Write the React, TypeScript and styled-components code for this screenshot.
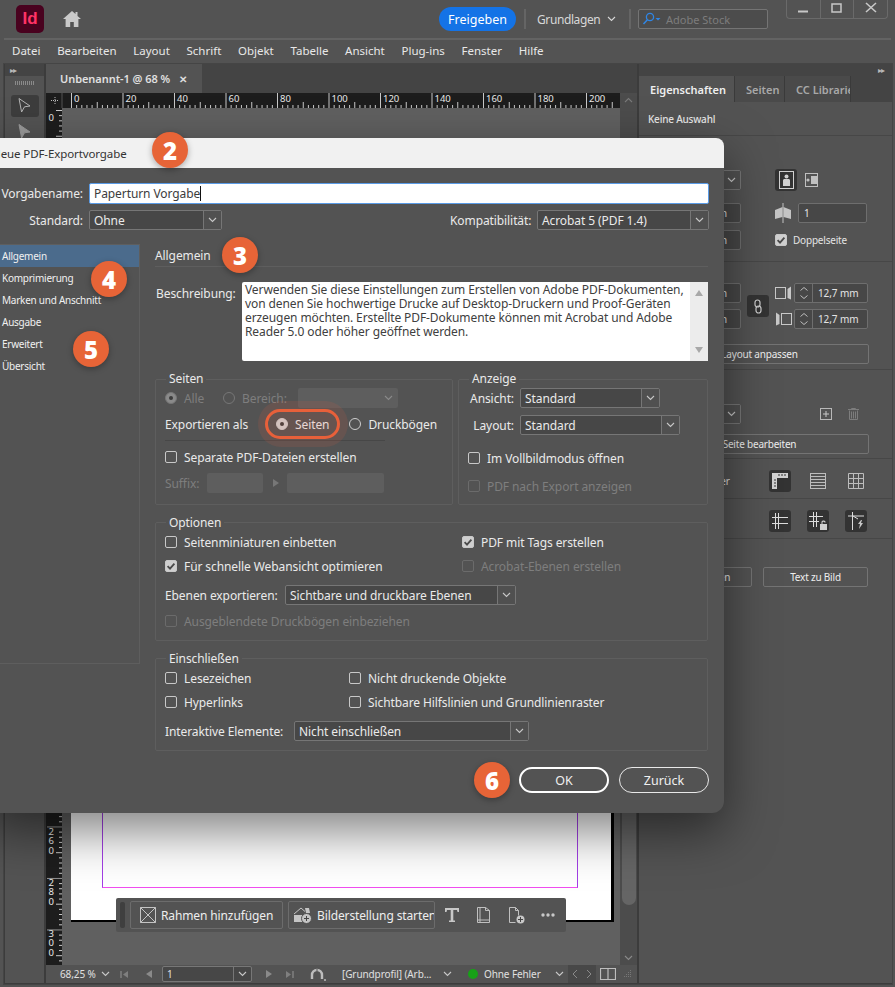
import React from "react";
import styled, { createGlobalStyle } from "styled-components";

const FONT = `"Noto Sans", "Open Sans", sans-serif`;
const TRACK = "-0.09px";

const Global = createGlobalStyle`
  html, body { margin: 0; padding: 0; background: #535353; }
  * { box-sizing: border-box; }
  svg { flex: none; }
`;

/* app window */
const Window = styled.div`
  position: relative;
  width: 895px;
  height: 987px;
  overflow: hidden;
  background: #535353;
  color: #e4e4e4;
  font-family: ${FONT};
  font-size: 12px;
  display: flex;
  flex-direction: column;
`;

const TitleBar = styled.div`
  height: 40px;
  margin: 0 4px;
  border-bottom: 2px solid #636363;
  display: flex;
  align-items: center;
  padding-left: 12px;
  flex: none;
  position: relative;
`;

const AppLogo = styled.div`
  width: 28px;
  height: 28px;
  border-radius: 5px;
  background: #49021f;
  color: #ff3366;
  font-family: "Liberation Sans", sans-serif;
  font-weight: 700;
  font-size: 17px;
  display: flex;
  align-items: center;
  justify-content: center;
`;

const HomeBtn = styled.div`
  margin-left: 19px;
  width: 18px;
  height: 16px;
  display: flex;
`;

const ShareBtn = styled.div`
  margin-left: 358px;
  width: 77px;
  height: 24px;
  border-radius: 12px;
  background: #1473e6;
  color: #fff;
  font-size: 12.5px;
  display: flex;
  align-items: center;
  justify-content: center;
`;

const BarSep = styled.div<{ $ml: number; $mr: number }>`
  width: 2px;
  height: 20px;
  background: #656565;
  margin: 0 ${(p) => p.$mr}px 0 ${(p) => p.$ml}px;
`;

const Workspace = styled.span`
  font-size: 12px;
  letter-spacing: -0.4px;
  color: #d8d8d8;
  width: 62px;
  white-space: nowrap;
`;

const WorkspaceChevron = styled.div`
  width: 25px;
  display: flex;
  justify-content: center;
`;

const SearchBox = styled.div`
  width: 130px;
  height: 20px;
  border: 1px solid #747474;
  border-radius: 2px;
  background: #4c4c4c;
  display: flex;
  align-items: center;
  gap: 4px;
  padding-left: 3px;
  color: #7d7d7d;
  font-size: 11px;
`;

const WinControls = styled.div`
  position: absolute;
  top: -2px;
  right: 3px;
  width: 102px;
  height: 21px;
  border: 1px solid #6a6a6a;
  border-top: 0;
  border-radius: 0 0 4px 4px;
  display: flex;
`;

const WinCtl = styled.div`
  flex: 1;
  display: flex;
  align-items: center;
  justify-content: center;
  border-right: 1px solid #6a6a6a;
  &:last-child { border-right: 0; }
`;

const MenuBar = styled.div`
  height: 23px;
  margin: 0 4px;
  padding: 0 0 2px 8px;
  display: flex;
  align-items: center;
  gap: 16.7px;
  flex: none;
  font-size: 11.5px;
  color: #e8e8e8;
`;

/* workspace */
const Main = styled.div`
  flex: 1;
  display: flex;
  margin: 1px 3px 3px 4px;
  min-height: 0;
  border-bottom: 1px solid #3c3c3c;
  outline: 1px solid #454545;
`;

const ToolColumn = styled.div`
  width: 42px;
  flex: none;
  display: flex;
  flex-direction: column;
  align-items: center;
  border-right: 2px solid #3c3c3c;
  border-left: 1px solid #3c3c3c;
`;

const CollapseBar = styled.div<{ $right?: boolean }>`
  height: 12px;
  width: 100%;
  flex: none;
  background: #444;
  color: #b8b8b8;
  font-size: 8px;
  line-height: 12px;
  letter-spacing: -1px;
  text-align: ${(p) => (p.$right ? "right" : "left")};
  padding: 0 8px 0 5px;
`;

const Grip = styled.div`
  width: 20px;
  height: 4px;
  margin-top: 5px;
  background: repeating-linear-gradient(90deg, #8a8a8a 0 1px, transparent 1px 2px);
`;

const ToolBtn = styled.div<{ $on?: boolean }>`
  width: 28px;
  height: 22px;
  margin-top: ${(p) => (p.$on ? "10px" : "4px")};
  border-radius: 3px;
  background: ${(p) => (p.$on ? "#3d3d3d" : "transparent")};
  display: flex;
  align-items: center;
  justify-content: center;
`;

const DocColumn = styled.div`
  width: 591px;
  flex: none;
  display: flex;
  flex-direction: column;
  min-height: 0;
`;

const TabRow = styled.div`
  height: 29px;
  background: #444;
  flex: none;
  display: flex;
`;

const DocTab = styled.div`
  width: 156px;
  background: #535353;
  display: flex;
  align-items: center;
  padding-left: 14px;
  gap: 9px;
  font-weight: 600;
  font-size: 11px;
  letter-spacing: -0.05px;
  color: #e0e0e0;
`;

const CloseX = styled.span`
  font-size: 10px;
  font-weight: 700;
  color: #ddd;
`;

const DocBody = styled.div`
  flex: 1;
  display: flex;
  min-height: 0;
`;

const DocArea = styled.div`
  flex: 1;
  display: flex;
  flex-direction: column;
  min-width: 0;
`;

const TopRuler = styled.svg`
  display: block;
  width: 574px;
  height: 15px;
  flex: none;
  background: #1d1d1d;
`;

const CanvasRow = styled.div`
  flex: 1;
  display: flex;
  min-height: 0;
  position: relative;
`;

const SideRuler = styled.svg`
  display: block;
  width: 16px;
  height: 100%;
  flex: none;
  background: #1d1d1d;
`;

const Canvas = styled.div`
  flex: 1;
  background: #606060;
  display: flex;
  align-items: flex-end;
  padding: 0 0 43px 9px;
`;

const Page = styled.div`
  width: 543px;
  height: 620px;
  background: #fff;
  border-right: 3px solid #000;
  border-bottom: 2px solid #000;
  padding: 0 33px 32px 31px;
  display: flex;
`;

const MarginBox = styled.div`
  flex: 1;
  border: 1px solid #a33fe6;
  border-bottom-color: #f14df0;
`;

const FloatBar = styled.div`
  position: absolute;
  left: 70px;
  bottom: 33px;
  width: 450px;
  height: 34px;
  background: #535353;
  border-radius: 2px;
  display: flex;
  align-items: center;
  padding-left: 4px;
`;

const FloatGrip = styled.div`
  width: 5px;
  height: 26px;
  background: #3f3f3f;
  border-radius: 2px;
  margin-right: 5px;
`;

const FloatBtn = styled.div<{ $w: number; $pl: number }>`
  width: ${(p) => p.$w}px;
  height: 28px;
  flex: none;
  border: 1px solid #6c6c6c;
  border-radius: 2px;
  margin-right: 5px;
  display: flex;
  align-items: center;
  gap: 5px;
  padding-left: ${(p) => p.$pl}px;
  font-size: 12px;
  letter-spacing: -0.12px;
  color: #eee;
  white-space: nowrap;
  overflow: hidden;
`;

const FloatIcon = styled.div<{ $ml: number }>`
  margin-left: ${(p) => p.$ml}px;
  display: flex;
`;

const VScroll = styled.div`
  width: 17px;
  flex: none;
  background: #4c4c4c;
  display: flex;
  flex-direction: column;
  align-items: center;
  padding: 4px 0 4px;
`;

const ScrollThumb = styled.div`
  width: 14px;
  height: 510px;
  margin-top: auto;
  margin-bottom: 50px;
  background: #656565;
  border-radius: 7px;
`;

const StatusBar = styled.div`
  height: 18px;
  flex: none;
  background: #535353;
  display: flex;
  align-items: center;
  padding-left: 14px;
  font-size: 10px;
  letter-spacing: -0.1px;
  color: #e0e0e0;
  white-space: nowrap;
`;

const StatusText = styled.span<{ $w: number }>`
  width: ${(p) => p.$w}px;
  flex: none;
`;

const StatusIcon = styled.div<{ $w: number }>`
  width: ${(p) => p.$w}px;
  flex: none;
  display: flex;
  align-items: center;
  justify-content: center;
`;

const PageField = styled.div`
  width: 90px;
  height: 16px;
  flex: none;
  border: 1px solid #777;
  border-radius: 2px;
  background: #474747;
  display: flex;
  align-items: center;
  padding-left: 4px;
`;

const PageFieldArrow = styled.div`
  margin-left: auto;
  width: 18px;
  height: 100%;
  border-left: 1px solid #777;
  display: flex;
  align-items: center;
  justify-content: center;
`;

const StatusDot = styled.div`
  width: 10px;
  height: 10px;
  border-radius: 50%;
  background: #17a117;
  margin: 0 6px 0 0;
  flex: none;
`;

const StatusNav = styled.div`
  width: 28px;
  height: 100%;
  margin-left: 2px;
  background: #484848;
  flex: none;
  display: flex;
  align-items: center;
  justify-content: space-around;
`;

/* right panel */
const Panel = styled.div`
  flex: 1;
  display: flex;
  flex-direction: column;
  border-left: 2px solid #3c3c3c;
  min-width: 0;
`;

const PanelTabs = styled.div`
  height: 26px;
  flex: none;
  display: flex;
  background: #444;
  font-size: 11px;
  font-weight: 600;
`;

const PanelTab = styled.div<{ $w: number; $on?: boolean }>`
  width: ${(p) => p.$w}px;
  flex: none;
  display: flex;
  align-items: center;
  padding-left: 11px;
  white-space: nowrap;
  overflow: hidden;
  background: ${(p) => (p.$on ? "#535353" : "#4a4a4a")};
  color: ${(p) => (p.$on ? "#eee" : "#a8a8a8")};
  border-right: 1px solid #3a3a3a;
`;

const PanelSection = styled.div<{ $h: number; $pt?: number }>`
  height: ${(p) => p.$h}px;
  flex: none;
  padding: ${(p) => p.$pt ?? 0}px 23px 0 11px;
  border-bottom: 1px solid #474747;
  display: flex;
  flex-direction: column;
`;

const NoSelection = styled.div`
  font-size: 10px;
  letter-spacing: -0.2px;
  font-weight: 500;
  height: 33px;
  margin-left: -2px;
  display: flex;
  align-items: center;
  color: #e6e6e6;
`;

const PanelRow = styled.div<{ $mt?: number; $pl?: number }>`
  display: flex;
  align-items: center;
  margin-top: ${(p) => p.$mt ?? 0}px;
  padding-left: ${(p) => p.$pl ?? 0}px;
`;

const PanelColumn = styled.div<{ $ml?: number }>`
  display: flex;
  flex-direction: column;
  gap: 6px;
  margin-left: ${(p) => p.$ml ?? 0}px;
`;

const PanelField = styled.div<{ $w: number; $ml?: number }>`
  width: ${(p) => p.$w}px;
  height: 20px;
  flex: none;
  margin-left: ${(p) => p.$ml ?? 0}px;
  border: 1px solid #6e6e6e;
  border-radius: 2px;
  background: #474747;
  display: flex;
  align-items: center;
  padding: 0 ${(p) => (p.$w < 80 ? 5 : 13)}px 0 5px;
  font-size: 10px;
  color: #e6e6e6;
  justify-content: ${(p) => (p.$w < 80 ? "flex-start" : "flex-end")};
  white-space: nowrap;
`;

const SpinField = styled.div`
  width: 74px;
  height: 20px;
  flex: none;
  margin-left: 2px;
  border: 1px solid #6e6e6e;
  border-radius: 2px;
  background: #474747;
  display: flex;
  align-items: center;
  font-size: 10px;
  letter-spacing: -0.1px;
`;

const SpinArrows = styled.div`
  width: 18px;
  height: 100%;
  border-right: 1px solid #6e6e6e;
  display: flex;
  align-items: center;
  justify-content: center;
  margin-right: 5px;
`;

const IconBtn = styled.div<{ $w?: number; $ml?: number; $on?: boolean }>`
  width: ${(p) => p.$w ?? 22}px;
  height: 22px;
  flex: none;
  margin-left: ${(p) => p.$ml ?? 0}px;
  border-radius: 3px;
  background: ${(p) => (p.$on ? "#333" : "transparent")};
  display: flex;
  align-items: center;
  justify-content: center;
`;

const PanelButton = styled.div<{ $w?: number; $ml?: number }>`
  width: ${(p) => (p.$w ? `${p.$w}px` : "100%")};
  height: 20px;
  flex: none;
  margin-left: ${(p) => p.$ml ?? 0}px;
  border: 1px solid #747474;
  border-radius: 2px;
  display: flex;
  align-items: center;
  justify-content: center;
  font-size: 10px;
  letter-spacing: -0.2px;
  color: #eee;
  white-space: nowrap;
`;

const PanelLabel = styled.div`
  width: 80px;
  text-align: right;
  font-size: 10px;
  flex: none;
  white-space: nowrap;
`;

const PanelCheckText = styled.span`
  font-size: 10px;
  letter-spacing: -0.2px;
  margin-left: 6px;
`;

const PanelCheck = styled.div`
  margin-left: 34px;
  display: flex;
`;

/* dialog */
const Dialog = styled.div`
  position: absolute;
  left: -14px;
  top: 138px;
  width: 738px;
  height: 675px;
  background: #535353;
  border-radius: 0 10px 12px 0;
  box-shadow: 0 18px 50px rgba(0, 0, 0, 0.5);
  color: #eaeaea;
  font-size: 12px;
`;

const DialogTitle = styled.div`
  height: 30px;
  background: #f1f1f1;
  color: #333;
  border-radius: 0 8px 0 0;
  display: flex;
  align-items: center;
  padding-left: 6px;
  font-size: 11.5px;
  margin-bottom: 15px;
  letter-spacing: -0.1px;
`;

const FormRow = styled.div<{ $mt?: number }>`
  display: flex;
  align-items: center;
  margin-top: ${(p) => p.$mt ?? 0}px;
  width: 723px;
`;

const FieldLabel = styled.div<{ $w: number; $right?: boolean; $ml?: number }>`
  width: ${(p) => p.$w}px;
  flex: none;
  margin-left: ${(p) => p.$ml ?? 0}px;
  text-align: ${(p) => (p.$right ? "right" : "left")};
  white-space: nowrap;
  letter-spacing: ${TRACK};
`;

const NameInput = styled.div`
  margin-left: 6px;
  flex: 1;
  height: 21px;
  background: #fff;
  border: 1px solid #5a9be6;
  border-radius: 2px;
  color: #3c3c3c;
  display: flex;
  align-items: center;
  padding-left: 4px;
  letter-spacing: ${TRACK};
`;

const Caret = styled.span`
  width: 1px;
  height: 15px;
  background: #111;
`;

const SelectBox = styled.div<{ $w: number; $ml?: number }>`
  width: ${(p) => p.$w}px;
  height: 20px;
  flex: none;
  margin-left: ${(p) => p.$ml ?? 0}px;
  border: 1px solid #767676;
  border-radius: 2px;
  background: #474747;
  display: flex;
  align-items: center;
  letter-spacing: ${TRACK};
`;

const SelectValue = styled.div`
  flex: 1;
  padding-left: 4px;
  white-space: nowrap;
  overflow: hidden;
`;

const SelectArrow = styled.div`
  width: 18px;
  height: 100%;
  flex: none;
  border-left: 1px solid #767676;
  background: #505050;
  display: flex;
  align-items: center;
  justify-content: center;
`;

const DialogBody = styled.div`
  display: flex;
  margin-top: 14px;
`;

const SideNav = styled.div`
  width: 154px;
  height: 420px;
  flex: none;
  border-top: 1px solid #5e5e5e;
  border-right: 1px solid #5e5e5e;
  border-bottom: 1px solid #5e5e5e;
`;

const NavItem = styled.div<{ $on?: boolean }>`
  height: 22px;
  padding-left: 16px;
  display: flex;
  align-items: center;
  font-size: 10px;
  letter-spacing: -0.25px;
  color: #f0f0f0;
  background: ${(p) => (p.$on ? "#4b6b8c" : "transparent")};
`;

const Content = styled.div`
  width: 553px;
  margin-left: 15px;
`;

const SectionHead = styled.div`
  height: 23px;
  border-bottom: 1px solid #5e5e5e;
  display: flex;
  align-items: center;
  letter-spacing: ${TRACK};
`;

const DescRow = styled.div`
  display: flex;
  margin-top: 15px;
`;

const DescLabel = styled.div`
  width: 87px;
  padding: 3px 0 0 1px;
  flex: none;
  letter-spacing: ${TRACK};
`;

const DescBox = styled.div`
  flex: 1;
  min-width: 0;
  height: 79px;
  background: #fff;
  border-radius: 2px;
  color: #404040;
  display: flex;
  line-height: 14px;
  letter-spacing: ${TRACK};
`;

const DescText = styled.div`
  flex: 1;
  min-width: 0;
  padding: 1px 0 0 3px;
  white-space: nowrap;
`;

const DescScroll = styled.div`
  width: 18px;
  flex: none;
  background: #ececec;
  display: flex;
  flex-direction: column;
  align-items: center;
  justify-content: space-between;
  padding: 7px 0;
`;

const GroupRow = styled.div`
  display: flex;
  gap: 5px;
  margin-top: 18px;
`;

const Group = styled.div<{ $w?: number; $h: number; $mt?: number }>`
  position: relative;
  width: ${(p) => (p.$w ? `${p.$w}px` : "100%")};
  height: ${(p) => p.$h}px;
  margin-top: ${(p) => p.$mt ?? 0}px;
  border: 1px solid #5e5e5e;
  border-radius: 2px;
  padding: 8px 0 0 9px;
  display: flex;
  flex-direction: column;
  flex: none;
`;

const Legend = styled.div<{ $top: number }>`
  position: absolute;
  top: ${(p) => p.$top}px;
  left: 10px;
  padding: 0 3px;
  background: #535353;
  letter-spacing: ${TRACK};
`;

const GRow = styled.div<{ $mt?: number }>`
  display: flex;
  align-items: center;
  height: 20px;
  flex: none;
  margin-top: ${(p) => p.$mt ?? 0}px;
`;

const GLabel = styled.span<{ $w?: number; $off?: boolean; $right?: boolean }>`
  ${(p) => (p.$w ? `width: ${p.$w}px; flex: none;` : "")}
  text-align: ${(p) => (p.$right ? "right" : "left")};
  color: ${(p) => (p.$off ? "#7e7e7e" : "#eaeaea")};
  white-space: nowrap;
  letter-spacing: ${TRACK};
`;

const CheckBox = styled.div<{ $off?: boolean; $on?: boolean }>`
  width: 12px;
  height: 12px;
  flex: none;
  border-radius: 2px;
  border: 1px solid ${(p) => (p.$off ? "#6b6b6b" : "#c8c8c8")};
  background: ${(p) => (p.$on ? "#cfcfcf" : "transparent")};
  display: flex;
  align-items: center;
  justify-content: center;
`;

const CheckCell = styled.div<{ $w?: number }>`
  display: flex;
  align-items: center;
  gap: 7px;
  ${(p) => (p.$w ? `width: ${p.$w}px; flex: none;` : "")}
`;

const RadioDot = styled.div<{ $off?: boolean; $on?: boolean }>`
  width: 12px;
  height: 12px;
  flex: none;
  border-radius: 50%;
  border: 1px solid ${(p) => (p.$off ? "#777" : "#cfcfcf")};
  background: ${(p) => (p.$on ? (p.$off ? "#8a8a8a" : "#d2d2d2") : "transparent")};
  display: flex;
  align-items: center;
  justify-content: center;
  &::after {
    content: "";
    display: ${(p) => (p.$on ? "block" : "none")};
    width: 4px;
    height: 4px;
    border-radius: 50%;
    background: #3c3c3c;
  }
`;

const RadioCell = styled.div<{ $ml?: number; $w?: number }>`
  display: flex;
  align-items: center;
  gap: 7px;
  margin-left: ${(p) => p.$ml ?? 0}px;
  ${(p) => (p.$w ? `width: ${p.$w}px; flex: none;` : "")}
`;

const FocusRing = styled.div`
  position: relative;
  margin-left: 28px;
  display: flex;
  align-items: center;
  gap: 7px;
`;

const Halo = styled.div`
  position: absolute;
  left: -18px;
  top: 50%;
  margin-top: -23px;
  width: 90px;
  height: 46px;
  border-radius: 23px;
  background: rgba(232, 96, 58, 0.13);
  &::after {
    content: "";
    position: absolute;
    inset: 8px 8px 8px 7px;
    border: 3px solid #e8603a;
    border-radius: 15px;
  }
`;

const DisabledSelect = styled.div<{ $w: number }>`
  width: ${(p) => p.$w}px;
  height: 20px;
  flex: none;
  background: #5e5e5e;
  border-radius: 2px;
  display: flex;
  align-items: center;
  justify-content: flex-end;
  padding-right: 5px;
`;

const SuffixArrow = styled.div`
  width: 24px;
  flex: none;
  display: flex;
  justify-content: center;
`;

const Divider = styled.div`
  width: 220px;
  height: 1px;
  flex: none;
  margin-top: 6px;
  background: #474747;
`;

const ButtonRow = styled.div`
  display: flex;
  justify-content: flex-end;
  gap: 10px;
  margin-top: 16px;
  width: 554px;
`;

const DialogButton = styled.div<{ $primary?: boolean }>`
  width: 90px;
  height: 26px;
  border-radius: 13px;
  border: ${(p) => (p.$primary ? "2px solid #fff" : "1px solid #e8e8e8")};
  display: flex;
  align-items: center;
  justify-content: center;
  color: #f0f0f0;
  font-size: 12.5px;
`;

const Badge = styled.div<{ $x: number; $y: number }>`
  position: absolute;
  left: ${(p) => p.$x - 18}px;
  top: ${(p) => p.$y - 18}px;
  width: 36px;
  height: 36px;
  border-radius: 50%;
  background: #e76437;
  color: #fff;
  font-family: "Open Sans", sans-serif;
  font-weight: 800;
  font-size: 24px;
  display: flex;
  align-items: center;
  justify-content: center;
  box-shadow: 0 2px 6px rgba(0, 0, 0, 0.3);
`;

/* small drawings */
const Chevron = ({ c = "#c8c8c8", up }: { c?: string; up?: boolean }) => (
  <svg width="9" height="6" viewBox="0 0 9 6">
    <path d={up ? "M1 5l3.500-3.500L8 5" : "M1 1l3.500 3.500L8 1"} fill="none" stroke={c} strokeWidth="1.100" />
  </svg>
);

const Tick = () => (
  <svg width="10" height="10" viewBox="0 0 10 10">
    <path d="M1.600 5.200l2.400 2.500 4.400-5" fill="none" stroke="#4a4a4a" strokeWidth="1.800" />
  </svg>
);

const Triangle = ({ dir, c = "#8a8a8a", s = 8 }: { dir: "l" | "r" | "u" | "d"; c?: string; s?: number }) => {
  const pts = { l: "8,0 8,8 2,4", r: "2,0 2,8 8,4", u: "0,7 8,7 4,1", d: "0,1 8,1 4,7" }[dir];
  return (
    <svg width={s} height={s} viewBox="0 0 8 8">
      <polygon points={pts} fill={c} />
    </svg>
  );
};

const Spin = () => (
  <svg width="10" height="14" viewBox="0 0 10 14">
    <path d="M1.500 4.500L5 1.500l3.500 3M1.500 9.500L5 12.500l3.500-3" fill="none" stroke="#bdbdbd" strokeWidth="1" />
  </svg>
);

const HomeIcon = () => (
  <svg width="18" height="16" viewBox="0 0 18 16">
    <path d="M9 0L0 8h2.600v8h4.600v-5h3.600v5h4.600V8H18L14.500 4.900V1h-2v2.100z" fill="#c9c9c9" />
  </svg>
);

const SearchIcon = () => (
  <svg width="20" height="14" viewBox="0 0 20 14">
    <circle cx="8" cy="5" r="3.600" fill="none" stroke="#2f86e6" strokeWidth="1.300" />
    <path d="M5.400 7.800L1.500 12" stroke="#2f86e6" strokeWidth="1.500" />
    <path d="M13.500 6h5l-2.500 2.600z" fill="#2f86e6" />
  </svg>
);

const SelectArrowIcon = ({ filled }: { filled?: boolean }) => (
  <svg width="18" height="19" viewBox="0 0 18 19">
    <path d="M3 1.500l11 7.500-5.500.8L5.600 15z" fill={filled ? "#9a9a9a" : "none"} stroke={filled ? "#9a9a9a" : "#b4b4b4"} strokeWidth="1" />
  </svg>
);

const Portrait = () => (
  <svg width="15" height="18" viewBox="0 0 15 18">
    <rect x=".5" y=".5" width="14" height="17" fill="none" stroke="#d0d0d0" />
    <circle cx="7.500" cy="5.500" r="2" fill="#d0d0d0" />
    <path d="M4 15V9.500c0-.8.8-1.400 1.500-1.400h4c.8 0 1.500.6 1.500 1.400V15z" fill="#d0d0d0" />
  </svg>
);

const Landscape = () => (
  <svg width="13" height="14" viewBox="0 0 13 14">
    <rect x=".5" y=".5" width="12" height="13" fill="none" stroke="#c0c0c0" />
    <circle cx="3" cy="7" r="1.600" fill="#c0c0c0" />
    <path d="M6 3h6v8H6z" fill="#c0c0c0" />
  </svg>
);

const FacingPages = () => (
  <svg width="18" height="20" viewBox="0 0 18 20">
    <path d="M8.500 4L1 7v9l7.500-2zM9.500 4L17 7v9l-7.500-2z" fill="#c4c4c4" />
    <path d="M9 0v20" stroke="#c4c4c4" />
  </svg>
);

const ChainIcon = () => (
  <svg width="10" height="15" viewBox="0 0 10 15">
    <rect x="2" y="1" width="5" height="7" rx="2.500" fill="none" stroke="#ccc" strokeWidth="1.200" />
    <rect x="3" y="7" width="5" height="7" rx="2.500" fill="none" stroke="#ccc" strokeWidth="1.200" />
  </svg>
);

const MarginIcon = ({ flip }: { flip?: boolean }) => (
  <svg width="17" height="14" viewBox="0 0 17 14" style={flip ? { transform: "scaleX(-1)" } : undefined}>
    <rect x=".5" y="1.500" width="10" height="11" fill="none" stroke="#c8c8c8" />
    <path d="M12.500 3L16 .5v13l-3.500-1.500z" fill="#c8c8c8" />
  </svg>
);

const PlusBox = () => (
  <svg width="12" height="12" viewBox="0 0 12 12">
    <rect x=".5" y=".5" width="11" height="11" fill="none" stroke="#b8b8b8" />
    <path d="M6 3v6M3 6h6" stroke="#c8c8c8" />
  </svg>
);

const Trash = () => (
  <svg width="11" height="12" viewBox="0 0 11 12">
    <path d="M0 1.500h11M3.500 1.500V.5h4v1M1.500 2.500v9h8v-9M3.500 3.500v7M5.500 3.500v7M7.500 3.500v7" fill="none" stroke="#7d7d7d" />
  </svg>
);

const RulerIcon = () => (
  <svg width="16" height="16" viewBox="0 0 16 16">
    <path d="M0 0h16v5H5v11H0z" fill="#d0d0d0" />
    <path d="M7 1v2M10 1v2M13 1v2M2 7h2M2 10h2M2 13h2" stroke="#333" />
  </svg>
);

const LinesIcon = () => (
  <svg width="16" height="16" viewBox="0 0 16 16">
    <rect x=".5" y=".5" width="15" height="15" fill="none" stroke="#bdbdbd" />
    <path d="M0 3.500h16M0 6.500h16M0 9.500h16M0 12.500h16" stroke="#bdbdbd" />
  </svg>
);

const GridIcon = () => (
  <svg width="16" height="16" viewBox="0 0 16 16">
    <path d="M.5 .5h15v15H.5zM.5 5.500h15M.5 10.500h15M5.500 .5v15M10.500 .5v15" fill="none" stroke="#bdbdbd" />
  </svg>
);

const GuideIcon = ({ lock, bolt }: { lock?: boolean; bolt?: boolean }) => (
  <svg width="18" height="18" viewBox="0 0 18 18">
    {bolt ? (
      <>
        <path d="M5.500 0v18M1 4h16M6 4l5 3" fill="none" stroke="#dcdcdc" />
        <path d="M14 8l-3 4h2l-1 5 4-6h-2l1-3z" fill="#c8c8c8" />
      </>
    ) : (
      <>
        <path d={lock ? "M4.500 0v15M7.500 0v15M0 4.500h14M0 9.500h10" : "M4.500 1v16M7.500 1v16M1 5.500h16M1 11.500h16"} fill="none" stroke="#dcdcdc" />
        {lock && <path d="M11 12h7v6h-7zM12.500 12v-2c0-2 4-2 4 0v.5h-1c0-1-2-1-2 0v1.500z" fill="#d0d0d0" />}
      </>
    )}
  </svg>
);

const FrameIcon = () => (
  <svg width="16" height="16" viewBox="0 0 16 16">
    <path d="M.5 .5h15v15H.5zM.5 .5l15 15M15.500 .5l-15 15" fill="none" stroke="#c4c4c4" />
  </svg>
);

const GenImageIcon = () => (
  <svg width="19" height="17" viewBox="0 0 19 17">
    <path d="M1 7l7-6 4 3.500" fill="none" stroke="#c4c4c4" />
    <path d="M1 8h9v7H1z" fill="#c4c4c4" />
    <path d="M12 1h4l1 5h-4z" fill="#c4c4c4" />
    <circle cx="13.500" cy="11.500" r="5" fill="#c4c4c4" stroke="#535353" />
    <path d="M13.500 9v5M11 11.500h5" stroke="#444" />
  </svg>
);

const TextIcon = () => (
  <svg width="14" height="14" viewBox="0 0 14 14">
    <path d="M0 0h14v4h-1.500l-.5-2H8.300v10.500H10V14H4v-1.500h1.700V2H2l-.5 2H0z" fill="#c8c8c8" />
  </svg>
);

const DocsIcon = () => (
  <svg width="13" height="16" viewBox="0 0 13 16">
    <path d="M.5 .5h8l4 3v12H.5zM3 .5v15M.5 13h12M8.500 .5v3h4" fill="none" stroke="#c0c0c0" />
  </svg>
);

const DocPlusIcon = () => (
  <svg width="16" height="17" viewBox="0 0 16 17">
    <path d="M.5 .5h6l3 3v5M.5 .5v15h6M6.500 .5v3h3" fill="none" stroke="#c0c0c0" />
    <circle cx="11.500" cy="12.500" r="4" fill="#c8c8c8" />
    <path d="M11.500 10v5M9 12.500h5" stroke="#444" />
  </svg>
);

const DotsIcon = () => (
  <svg width="14" height="4" viewBox="0 0 14 4">
    <circle cx="2" cy="2" r="1.700" fill="#c8c8c8" />
    <circle cx="7" cy="2" r="1.700" fill="#c8c8c8" />
    <circle cx="12" cy="2" r="1.700" fill="#c8c8c8" />
  </svg>
);

const BarEnd = ({ right }: { right?: boolean }) => (
  <svg width="9" height="9" viewBox="0 0 9 9" style={right ? { transform: "scaleX(-1)" } : undefined}>
    <path d="M1 1v7" stroke="#7f7f7f" strokeWidth="1.500" />
    <path d="M8 1v7L3 4.500z" fill="#7f7f7f" />
  </svg>
);

const Gauge = () => (
  <svg width="16" height="13" viewBox="0 0 16 13">
    <path d="M2 11V7a5 5 0 0 1 10 0v4" fill="none" stroke="#bdbdbd" strokeWidth="2.400" />
    <path d="M7 1v4" stroke="#535353" />
    <circle cx="15" cy="12" r="1" fill="#bdbdbd" />
  </svg>
);

const BookIcon = () => (
  <svg width="16" height="12" viewBox="0 0 16 12">
    <path d="M.5 .5h15v11H.5zM8 .5v11" fill="none" stroke="#bdbdbd" strokeWidth="1.200" />
  </svg>
);

const ResizeGrip = () => (
  <svg width="10" height="10" viewBox="0 0 10 10">
    <path d="M8 1h1v1H8zM6 3h1v1H6zM8 3h1v1H8zM4 5h1v1H4zM6 5h1v1H6zM8 5h1v1H8zM2 7h1v1H2zM4 7h1v1H4zM6 7h1v1H6zM8 7h1v1H8z" fill="#777" />
  </svg>
);

const NavChevron = ({ right }: { right?: boolean }) => (
  <svg width="6" height="10" viewBox="0 0 6 10">
    <path d={right ? "M1 1l4 4-4 4" : "M5 1L1 5l4 4"} fill="none" stroke="#8a8a8a" />
  </svg>
);

const STEP = 51.5;

const HRuler = () => {
  const labels = [0, 20, 40, 60, 80, 100, 120, 140, 160, 180, 200];
  const minor = Array.from({ length: 106 }, (_, i) => i);
  return (
    <TopRuler viewBox="0 0 574 15">
      <path d="M5 7.500h8M9 4v8" stroke="#bbb" strokeDasharray="1 1" fill="none" />
      <path d="M16 0v15" stroke="#555" />
      {minor.map((i) => {
        const x = 25.5 + (i * STEP) / 10;
        const h = i % 10 === 0 ? 15 : i % 5 === 0 ? 6 : 3;
        return <path key={i} d={`M${x} ${15 - h}v${h}`} stroke="#c8c8c8" strokeWidth="1" />;
      })}
      {labels.map((n, i) => (
        <text key={n} x={28 + i * STEP} y={9} fontSize="9.500" fill="#e8e8e8" fontFamily="Noto Sans, sans-serif">
          {n}
        </text>
      ))}
    </TopRuler>
  );
};

// the ruler only shows above and below the dialog, so just those parts get ticks
const VRuler = () => {
  const top = Array.from({ length: 8 }, (_, i) => i);
  const bottom = Array.from({ length: 30 }, (_, i) => i);
  const labels: [string, number][] = [["0", 13], ["260", 727], ["280", 778], ["300", 829]];
  return (
    <SideRuler viewBox="0 0 16 857" preserveAspectRatio="none">
      {top.map((i) => {
        const h = i % 5 === 0 ? 6 : 3;
        return <path key={`t${i}`} d={`M${16 - h} ${2.5 + i * 5.15}h${h}`} stroke="#c8c8c8" />;
      })}
      {bottom.map((i) => {
        const y = 703.5 + (i * STEP) / 10;
        const h = i % 10 === 3 ? 15 : i % 5 === 3 ? 6 : 3;
        return <path key={`b${i}`} d={`M${16 - h} ${y}h${h}`} stroke="#c8c8c8" strokeWidth={h === 15 ? 0.7 : 1} />;
      })}
      {labels.map(([t, y]) => (
        <text key={t} y={y - 9.3} fontSize="9.500" fill="#e8e8e8" fontFamily="Noto Sans, sans-serif">
          {t.split("").map((c, j) => (
            <tspan key={j} x={2.5} dy={9.3}>{c}</tspan>
          ))}
        </text>
      ))}
    </SideRuler>
  );
};

const MENUS = ["Datei", "Bearbeiten", "Layout", "Schrift", "Objekt", "Tabelle", "Ansicht", "Plug-ins", "Fenster", "Hilfe"];
const NAV = ["Allgemein", "Komprimierung", "Marken und Anschnitt", "Ausgabe", "Erweitert", "Übersicht"];

const Check = ({ label, on, off, w }: { label: string; on?: boolean; off?: boolean; w?: number }) => (
  <CheckCell $w={w}>
    <CheckBox $on={on} $off={off}>{on && <Tick />}</CheckBox>
    <GLabel $off={off}>{label}</GLabel>
  </CheckCell>
);

const Select = ({ w, value, ml }: { w: number; value: string; ml?: number }) => (
  <SelectBox $w={w} $ml={ml}>
    <SelectValue>{value}</SelectValue>
    <SelectArrow><Chevron /></SelectArrow>
  </SelectBox>
);

export default function App() {
  return (
    <>
      <Global />
      <Window>
        <TitleBar>
          <AppLogo>Id</AppLogo>
          <HomeBtn><HomeIcon /></HomeBtn>
          <ShareBtn>Freigeben</ShareBtn>
          <BarSep $ml={8} $mr={11} />
          <Workspace>Grundlagen</Workspace>
          <WorkspaceChevron><Chevron c="#d8d8d8" /></WorkspaceChevron>
          <BarSep $ml={5} $mr={7} />
          <SearchBox><SearchIcon />Adobe Stock</SearchBox>
          <WinControls>
            <WinCtl>
              <svg width="12" height="12" viewBox="0 0 12 12"><path d="M1 9.500h10" stroke="#c8c8c8" strokeWidth="2" /></svg>
            </WinCtl>
            <WinCtl>
              <svg width="12" height="10" viewBox="0 0 12 10"><rect x="1" y="1" width="9" height="8" fill="none" stroke="#c8c8c8" strokeWidth="1.500" /></svg>
            </WinCtl>
            <WinCtl>
              <svg width="12" height="12" viewBox="0 0 12 12"><path d="M1 1l10 9M11 1L1 10" stroke="#c8c8c8" strokeWidth="1.600" /></svg>
            </WinCtl>
          </WinControls>
        </TitleBar>

        <MenuBar>
          {MENUS.map((m) => <span key={m}>{m}</span>)}
        </MenuBar>

        <Main>
          <ToolColumn>
            <CollapseBar>▸▸</CollapseBar>
            <Grip />
            <ToolBtn $on><SelectArrowIcon /></ToolBtn>
            <ToolBtn><SelectArrowIcon filled /></ToolBtn>
          </ToolColumn>

          <DocColumn>
            <TabRow>
              <DocTab>
                Unbenannt-1 @ 68 %
                <CloseX>✕</CloseX>
              </DocTab>
            </TabRow>
            <DocBody>
              <DocArea>
                <HRuler />
                <CanvasRow>
                  <VRuler />
                  <Canvas>
                    <Page><MarginBox /></Page>
                  </Canvas>
                  <FloatBar>
                    <FloatGrip />
                    <FloatBtn $w={153} $pl={9}><FrameIcon />Rahmen hinzufügen</FloatBtn>
                    <FloatBtn $w={147} $pl={4}><GenImageIcon />Bilderstellung starten</FloatBtn>
                    <FloatIcon $ml={5}><TextIcon /></FloatIcon>
                    <FloatIcon $ml={18}><DocsIcon /></FloatIcon>
                    <FloatIcon $ml={19}><DocPlusIcon /></FloatIcon>
                    <FloatIcon $ml={16}><DotsIcon /></FloatIcon>
                  </FloatBar>
                </CanvasRow>
              </DocArea>
              <VScroll>
                <Chevron c="#7a7a7a" up />
                <ScrollThumb />
                <Chevron c="#8a8a8a" />
              </VScroll>
            </DocBody>
            <StatusBar>
              <StatusText $w={36}>68,25 %</StatusText>
              <StatusIcon $w={18}><Chevron /></StatusIcon>
              <StatusIcon $w={20}><BarEnd /></StatusIcon>
              <StatusIcon $w={28}><Triangle dir="l" /></StatusIcon>
              <PageField>1<PageFieldArrow><Chevron /></PageFieldArrow></PageField>
              <StatusIcon $w={32}><Triangle dir="r" /></StatusIcon>
              <StatusIcon $w={10}><BarEnd right /></StatusIcon>
              <StatusIcon $w={48}><Gauge /></StatusIcon>
              <StatusText $w={98}>[Grundprofil] (Arb...</StatusText>
              <StatusIcon $w={14}><Chevron /></StatusIcon>
              <StatusIcon $w={14} />
              <StatusDot />
              <StatusText $w={68}>Ohne Fehler</StatusText>
              <StatusIcon $w={14}><Chevron /></StatusIcon>
              <StatusNav><NavChevron /><NavChevron right /></StatusNav>
              <StatusIcon $w={24}><BookIcon /></StatusIcon>
              <StatusIcon $w={14}><ResizeGrip /></StatusIcon>
            </StatusBar>
          </DocColumn>

          <Panel>
            <CollapseBar $right>▸▸</CollapseBar>
            <PanelTabs>
              <PanelTab $w={96} $on>Eigenschaften</PanelTab>
              <PanelTab $w={50}>Seiten</PanelTab>
              <PanelTab $w={66}>CC Libraries</PanelTab>
            </PanelTabs>
            <PanelSection $h={34}>
              <NoSelection>Keine Auswahl</NoSelection>
            </PanelSection>

            <PanelSection $h={126} $pt={33}>
              <PanelRow>
                <Select w={91} value="A4" />
                <IconBtn $ml={34} $on><Portrait /></IconBtn>
                <IconBtn $w={13} $ml={8}><Landscape /></IconBtn>
              </PanelRow>
              <PanelRow $mt={11}>
                <PanelField $w={91}>210 mm</PanelField>
                <IconBtn $w={16} $ml={34}><FacingPages /></IconBtn>
                <PanelField $w={69} $ml={7}>1</PanelField>
              </PanelRow>
              <PanelRow $mt={6}>
                <PanelField $w={91}>297 mm</PanelField>
                <PanelCheck>
                  <CheckBox $on><Tick /></CheckBox>
                </PanelCheck>
                <PanelCheckText>Doppelseite</PanelCheckText>
              </PanelRow>
            </PanelSection>

            <PanelSection $h={108} $pt={21}>
              <PanelRow>
                <PanelColumn>
                  <PanelField $w={91}>12,7 mm</PanelField>
                  <PanelField $w={91}>12,7 mm</PanelField>
                </PanelColumn>
                <IconBtn $ml={6} $on><ChainIcon /></IconBtn>
                <PanelColumn $ml={6}>
                  <PanelRow>
                    <MarginIcon />
                    <SpinField><SpinArrows><Spin /></SpinArrows>12,7 mm</SpinField>
                  </PanelRow>
                  <PanelRow>
                    <MarginIcon flip />
                    <SpinField><SpinArrows><Spin /></SpinArrows>12,7 mm</SpinField>
                  </PanelRow>
                </PanelColumn>
              </PanelRow>
              <PanelRow $mt={15}>
                <PanelButton>Layout anpassen</PanelButton>
              </PanelRow>
            </PanelSection>

            <PanelSection $h={89} $pt={33}>
              <PanelRow>
                <Select w={91} value="[Ohne]" />
                <IconBtn $w={12} $ml={79}><PlusBox /></IconBtn>
                <IconBtn $w={11} $ml={16}><Trash /></IconBtn>
              </PanelRow>
              <PanelRow $mt={9}>
                <PanelButton>Seite bearbeiten</PanelButton>
              </PanelRow>
            </PanelSection>

            <PanelSection $h={40} $pt={11}>
              <PanelRow>
                <PanelLabel>Lineal &amp; Raster</PanelLabel>
                <IconBtn $ml={39} $on><RulerIcon /></IconBtn>
                <IconBtn $ml={16}><LinesIcon /></IconBtn>
                <IconBtn $ml={16}><GridIcon /></IconBtn>
              </PanelRow>
            </PanelSection>

            <PanelSection $h={40} $pt={11}>
              <PanelRow>
                <PanelLabel />
                <IconBtn $ml={39} $on><GuideIcon /></IconBtn>
                <IconBtn $ml={16} $on><GuideIcon lock /></IconBtn>
                <IconBtn $ml={16} $on><GuideIcon bolt /></IconBtn>
              </PanelRow>
            </PanelSection>

            <PanelRow $mt={28} $pl={11}>
              <PanelButton $w={102}>Konvertieren</PanelButton>
              <PanelButton $w={105} $ml={11}>Text zu Bild</PanelButton>
            </PanelRow>
          </Panel>
        </Main>

        <Dialog>
          <DialogTitle>Neue PDF-Exportvorgabe</DialogTitle>
          <FormRow>
            <FieldLabel $w={97} $right>Vorgabename:</FieldLabel>
            <NameInput>Paperturn Vorgabe<Caret /></NameInput>
          </FormRow>
          <FormRow $mt={6}>
            <FieldLabel $w={97} $right>Standard:</FieldLabel>
            <Select w={133} value="Ohne" ml={6} />
            <FieldLabel $w={81} $ml={228}>Kompatibilität:</FieldLabel>
            <Select w={172} value="Acrobat 5 (PDF 1.4)" ml={6} />
          </FormRow>

          <DialogBody>
            <SideNav>
              {NAV.map((n, i) => <NavItem key={n} $on={i === 0}>{n}</NavItem>)}
            </SideNav>
            <Content>
              <SectionHead>Allgemein</SectionHead>
              <DescRow>
                <DescLabel>Beschreibung:</DescLabel>
                <DescBox>
                  <DescText>
                    Verwenden Sie diese Einstellungen zum Erstellen von Adobe PDF-Dokumenten,<br />
                    von denen Sie hochwertige Drucke auf Desktop-Druckern und Proof-Geräten<br />
                    erzeugen möchten. Erstellte PDF-Dokumente können mit Acrobat und Adobe<br />
                    Reader 5.0 oder höher geöffnet werden.
                  </DescText>
                  <DescScroll>
                    <Triangle dir="u" c="#a8a8a8" />
                    <Triangle dir="d" c="#a8a8a8" />
                  </DescScroll>
                </DescBox>
              </DescRow>

              <GroupRow>
                <Group $w={298} $h={126}>
                  <Legend $top={-10}>Seiten</Legend>
                  <GRow>
                    <RadioCell $w={58}><RadioDot $off $on /><GLabel $off>Alle</GLabel></RadioCell>
                    <RadioCell $w={75}><RadioDot $off /><GLabel $off>Bereich:</GLabel></RadioCell>
                    <DisabledSelect $w={100}><Chevron c="#8a8a8a" /></DisabledSelect>
                  </GRow>
                  <GRow $mt={6}>
                    <GLabel $w={83}>Exportieren als</GLabel>
                    <FocusRing>
                      <Halo />
                      <RadioDot $on />
                      <GLabel>Seiten</GLabel>
                    </FocusRing>
                    <RadioCell $ml={20}><RadioDot /><GLabel>Druckbögen</GLabel></RadioCell>
                  </GRow>
                  <Divider />
                  <GRow $mt={6}><Check label="Separate PDF-Dateien erstellen" /></GRow>
                  <GRow $mt={6}>
                    <GLabel $w={42} $off>Suffix:</GLabel>
                    <DisabledSelect $w={56} />
                    <SuffixArrow><Triangle dir="r" c="#777" /></SuffixArrow>
                    <DisabledSelect $w={97} />
                  </GRow>
                </Group>
                <Group $w={250} $h={126}>
                  <Legend $top={-10}>Anzeige</Legend>
                  <GRow>
                    <GLabel $w={46} $right>Ansicht:</GLabel>
                    <Select w={140} value="Standard" ml={6} />
                  </GRow>
                  <GRow $mt={7}>
                    <GLabel $w={46} $right>Layout:</GLabel>
                    <Select w={160} value="Standard" ml={6} />
                  </GRow>
                  <GRow $mt={13}><Check label="Im Vollbildmodus öffnen" /></GRow>
                  <GRow $mt={8}><Check label="PDF nach Export anzeigen" off /></GRow>
                </Group>
              </GroupRow>

              <Group $h={119} $mt={17}>
                <Legend $top={-9}>Optionen</Legend>
                <GRow $mt={1}>
                  <Check label="Seitenminiaturen einbetten" w={297} />
                  <Check label="PDF mit Tags erstellen" on />
                </GRow>
                <GRow $mt={4}>
                  <Check label="Für schnelle Webansicht optimieren" on w={297} />
                  <Check label="Acrobat-Ebenen erstellen" off />
                </GRow>
                <GRow $mt={9}>
                  <GLabel $w={120}>Ebenen exportieren:</GLabel>
                  <Select w={231} value="Sichtbare und druckbare Ebenen" />
                </GRow>
                <GRow $mt={6}><Check label="Ausgeblendete Druckbögen einbeziehen" off /></GRow>
              </Group>

              <Group $h={93} $mt={17}>
                <Legend $top={-9}>Einschließen</Legend>
                <GRow $mt={1}>
                  <Check label="Lesezeichen" w={184} />
                  <Check label="Nicht druckende Objekte" />
                </GRow>
                <GRow $mt={4}>
                  <Check label="Hyperlinks" w={184} />
                  <Check label="Sichtbare Hilfslinien und Grundlinienraster" />
                </GRow>
                <GRow $mt={9}>
                  <GLabel $w={129}>Interaktive Elemente:</GLabel>
                  <Select w={235} value="Nicht einschließen" />
                </GRow>
              </Group>

              <ButtonRow>
                <DialogButton $primary>OK</DialogButton>
                <DialogButton>Zurück</DialogButton>
              </ButtonRow>
            </Content>
          </DialogBody>
        </Dialog>

        <Badge $x={170} $y={150}>2</Badge>
        <Badge $x={240} $y={255}>3</Badge>
        <Badge $x={109} $y={279}>4</Badge>
        <Badge $x={91} $y={349}>5</Badge>
        <Badge $x={492} $y={780}>6</Badge>
      </Window>
    </>
  );
}
